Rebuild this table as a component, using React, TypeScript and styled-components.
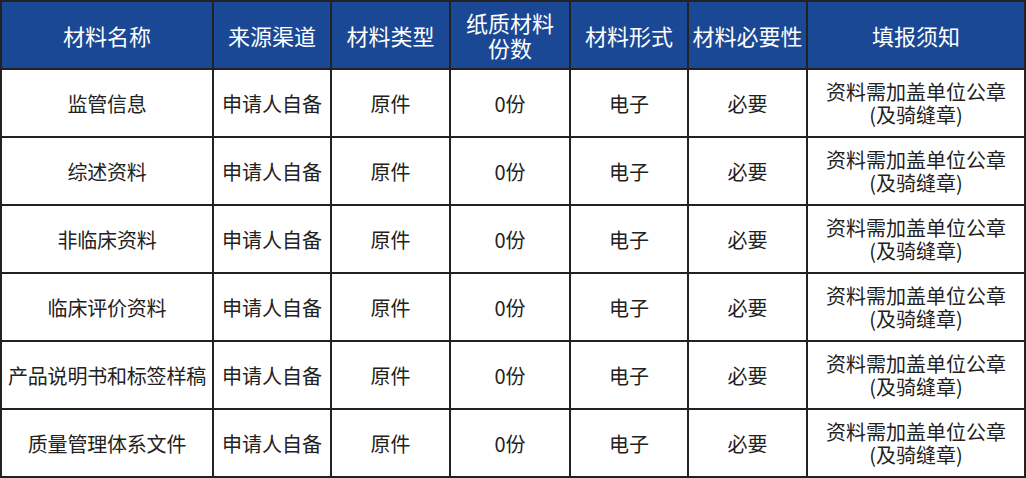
import styled, { createGlobalStyle } from 'styled-components'

const GlobalStyle = createGlobalStyle`
    html, body {
        margin: 0;
        padding: 0;
        background: #ffffff;
    }
    body {
        font-family: "Noto Sans CJK SC", "Liberation Sans", sans-serif;
    }
`

const columns = [
    { title: ['材料名称'], width: 212 },
    { title: ['来源渠道'], width: 118 },
    { title: ['材料类型'], width: 119 },
    { title: ['纸质材料', '份数'], width: 120 },
    { title: ['材料形式'], width: 118 },
    { title: ['材料必要性'], width: 119 },
    { title: ['填报须知'], width: 218 },
]

const materials = ['监管信息', '综述资料', '非临床资料', '临床评价资料', '产品说明书和标签样稿', '质量管理体系文件']

const App = () => {
    return (
        <>
            <GlobalStyle />
            <Table>
                <colgroup>
                    {columns.map((col, i) => (
                        <col key={i} style={{ width: col.width }} />
                    ))}
                </colgroup>
                <thead>
                    <tr>
                        {columns.map((col, i) => (
                            <HeadCell key={i}>
                                {col.title.map((line, j) => (
                                    <Line key={j}>{line}</Line>
                                ))}
                            </HeadCell>
                        ))}
                    </tr>
                </thead>
                <tbody>
                    {materials.map((name) => (
                        <tr key={name}>
                            <Cell $tight>{name}</Cell>
                            <Cell>申请人自备</Cell>
                            <Cell>原件</Cell>
                            <Cell>0份</Cell>
                            <Cell>电子</Cell>
                            <Cell>必要</Cell>
                            <Cell>
                                <Line>资料需加盖单位公章</Line>
                                <Line>(及骑缝章)</Line>
                            </Cell>
                        </tr>
                    ))}
                </tbody>
            </Table>
        </>
    )
}

export default App

const Table = styled.table`
    border-collapse: collapse;
    table-layout: fixed;
    width: 1024px;
    margin: 0;
`

const HeadCell = styled.th`
    height: 66px;
    padding: 0;
    background: #1a4894;
    color: #ffffff;
    border: 2px solid #222222;
    font-size: 22px;
    font-weight: 400;
    line-height: 25px;
    text-align: center;
    vertical-align: middle;
    white-space: nowrap;
`

const Cell = styled.td<{ $tight?: boolean }>`
    height: 66px;
    padding: 0;
    color: #222222;
    border: 2px solid #222222;
    font-size: 20px;
    line-height: 23px;
    text-align: center;
    vertical-align: middle;
    white-space: nowrap;
    letter-spacing: ${({ $tight }) => ($tight ? '-0.2px' : '0')};
`

const Line = styled.div`
    display: block;
`
